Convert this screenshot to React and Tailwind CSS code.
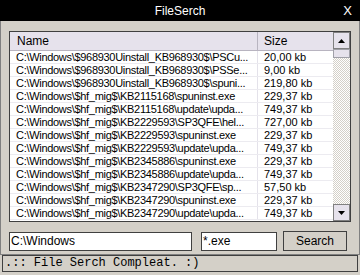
import React from "react";

const rows = [
  ["C:\\Windows\\$968930Uinstall_KB968930$\\PSCu...", "20,00 kb"],
  ["C:\\Windows\\$968930Uinstall_KB968930$\\PSSe...", "9,00 kb"],
  ["C:\\Windows\\$968930Uinstall_KB968930$\\spuni...", "219,80 kb"],
  ["C:\\Windows\\$hf_mig$\\KB2115168\\spuninst.exe", "229,37 kb"],
  ["C:\\Windows\\$hf_mig$\\KB2115168\\update\\upda...", "749,37 kb"],
  ["C:\\Windows\\$hf_mig$\\KB2229593\\SP3QFE\\hel...", "727,00 kb"],
  ["C:\\Windows\\$hf_mig$\\KB2229593\\spuninst.exe", "229,37 kb"],
  ["C:\\Windows\\$hf_mig$\\KB2229593\\update\\upda...", "749,37 kb"],
  ["C:\\Windows\\$hf_mig$\\KB2345886\\spuninst.exe", "229,37 kb"],
  ["C:\\Windows\\$hf_mig$\\KB2345886\\update\\upda...", "749,37 kb"],
  ["C:\\Windows\\$hf_mig$\\KB2347290\\SP3QFE\\sp...", "57,50 kb"],
  ["C:\\Windows\\$hf_mig$\\KB2347290\\spuninst.exe", "229,37 kb"],
  ["C:\\Windows\\$hf_mig$\\KB2347290\\update\\upda...", "749,37 kb"],
];

export default function App() {
  return (
    <div className="w-[360px] h-[275px] flex flex-col bg-[#d4d0c8] overflow-hidden font-['Liberation_Sans',sans-serif] text-black">
      <div className="h-[21px] bg-black text-white flex items-center relative shrink-0">
        <div className="flex-1 text-center text-[12px] leading-none">FileSerch</div>
        <div className="absolute right-[8px] top-[4px] text-[13px] leading-none">X</div>
      </div>
      <div className="flex-1 flex flex-col border border-[#808080] border-t-0 px-[8px] pt-[10px]">
        <div className="h-[191px] border border-[#404040] bg-white flex overflow-hidden">
          <div className="flex-1 flex flex-col overflow-hidden">
            <div className="h-[19px] flex bg-[#e6e2ec] border-b border-[#b8b4c0] shrink-0 text-[12px]">
              <div className="w-[248px] pl-[7px] flex items-center border-r border-[#b8b4c0]">Name</div>
              <div className="flex-1 pl-[6px] flex items-center">Size</div>
            </div>
            {rows.map((r, i) => (
              <div key={i} className="h-[13px] flex shrink-0 border-b border-[#ecebf0] text-[11px] leading-[12px]">
                <div className="w-[248px] pl-[6px] whitespace-nowrap overflow-hidden border-r border-[#e4e2ea] tracking-[-0.3px]">{r[0]}</div>
                <div className="flex-1 pl-[6px] whitespace-nowrap">{r[1]}</div>
              </div>
            ))}
          </div>
          <div className="w-[17px] flex flex-col shrink-0">
            <div className="h-[17px] bg-[#e6e2ec] border border-[#808080] flex items-center justify-center">
              <svg width="7" height="4" viewBox="0 0 7 4"><path d="M0 4 L3.5 0 L7 4 Z" fill="black" /></svg>
            </div>
            <div className="h-[9px] bg-[#e6e2ec] border border-[#a0a0a8]"></div>
            <div className="flex-1 bg-[repeating-conic-gradient(#d4d0c8_0_25%,#ffffff_0_50%)] bg-[length:2px_2px]"></div>
            <div className="h-[17px] bg-[#e6e2ec] border border-[#808080] flex items-center justify-center">
              <svg width="7" height="4" viewBox="0 0 7 4"><path d="M0 0 L3.5 4 L7 0 Z" fill="black" /></svg>
            </div>
          </div>
        </div>
        <div className="flex items-center gap-[9px] mt-[9px] h-[20px]">
          <div className="w-[183px] h-[19px] bg-white border border-[#404040] text-[12px] leading-[17px] pl-[1px] whitespace-nowrap">C:\Windows</div>
          <div className="w-[76px] h-[19px] bg-white border border-[#404040] text-[12px] leading-[17px] pl-[1px]">*.exe</div>
          <div className="w-[64px] h-[20px] bg-[#d4d0c8] border border-[#404040] text-[12px] flex items-center justify-center ml-[-3px]">Search</div>
        </div>
      </div>
      <div className="h-[17px] mx-[2px] mb-[3px] border border-[#404040] text-[12px] leading-[15px] pl-[2px] font-['Liberation_Mono',monospace] whitespace-pre shrink-0">.:: File Serch Compleat. :)</div>
    </div>
  );
}
